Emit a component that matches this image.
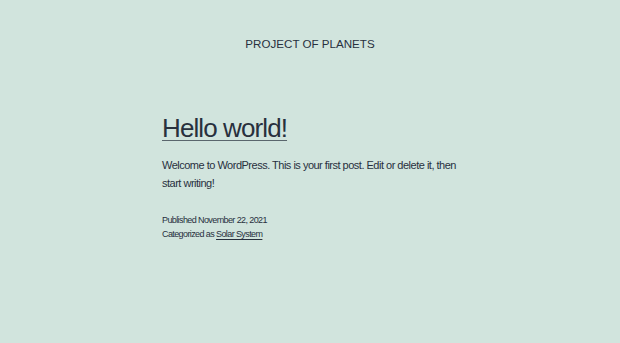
import React from 'react';

// 文章数据
const post = {
  title: 'Hello world!',
  body: 'Welcome to WordPress. This is your first post. Edit or delete it, then start writing!',
  published: 'November 22, 2021',
  category: 'Solar System',
};

const App: React.FC = () => {
  return (
    <div
      className="min-h-screen bg-[#d1e4dd] text-[#28303d]"
      style={{ fontFamily: '"Liberation Sans", Arial, sans-serif' }}
    >
      {/* 站点标题 */}
      <header className="pt-[36px] text-center">
        <p className="text-[11.6px] leading-[16px] uppercase">Project of Planets</p>
      </header>

      {/* 文章 */}
      <main className="mx-auto w-[296px] pt-[60px]">
        <h1 className="text-[26px] leading-[32px] tracking-[-0.9px]">
          <a
            href="#"
            className="underline decoration-1 underline-offset-[3px] decoration-[#28303d]/70"
          >
            {post.title}
          </a>
        </h1>

        <p className="mt-[12px] text-[11px] leading-[18px] tracking-[-0.5px]">{post.body}</p>

        <footer className="mt-[21px] text-[9px] leading-[14px] tracking-[-0.6px]">
          <div>Published {post.published}</div>
          <div>
            Categorized as{' '}
            <a href="#" className="underline decoration-1 underline-offset-[2px]">
              {post.category}
            </a>
          </div>
        </footer>
      </main>
    </div>
  );
};

export default App;
